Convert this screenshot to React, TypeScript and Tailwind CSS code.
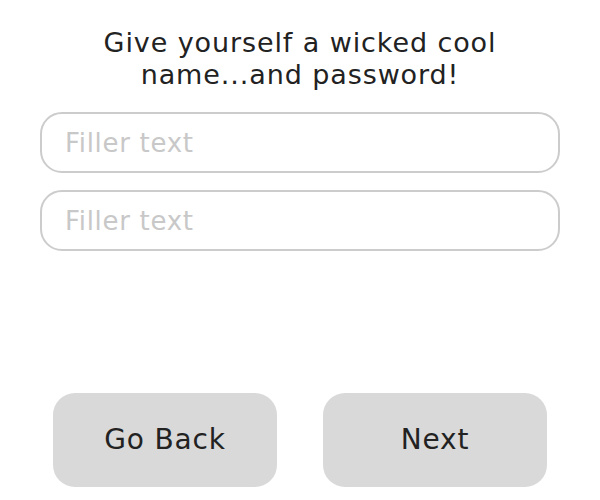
import React from 'react';

export default function App() {
  return (
    <div className="w-[600px] h-[500px] bg-white flex flex-col items-center font-['DejaVu_Sans','Open_Sans',sans-serif] text-[#222]">
      <h1 className="mt-[27px] text-center text-[27px] leading-[32px] font-normal tracking-[0.9px]">
        <span className="block">Give yourself a wicked cool</span>
        <span className="block">name...and password!</span>
      </h1>

      <div className="mt-[21px] w-[520px] flex flex-col gap-[17px]">
        <input
          type="text"
          placeholder="Filler text"
          className="h-[61px] w-full rounded-[22px] border-2 border-[#cccccc] px-[23px] text-[26px] tracking-[0.7px] outline-none placeholder:text-[#c8c8c8]"
        />
        <input
          type="password"
          placeholder="Filler text"
          className="h-[61px] w-full rounded-[22px] border-2 border-[#cccccc] px-[23px] text-[26px] tracking-[0.7px] outline-none placeholder:text-[#c8c8c8]"
        />
      </div>

      <div className="mt-[142px] flex gap-[46px]">
        <button className="w-[224px] h-[94px] rounded-[22px] bg-[#d9d9d9] text-[28px] tracking-[0.8px]">Go Back</button>
        <button className="w-[224px] h-[94px] rounded-[22px] bg-[#d9d9d9] text-[28px] tracking-[0.8px]">Next</button>
      </div>
    </div>
  );
}
